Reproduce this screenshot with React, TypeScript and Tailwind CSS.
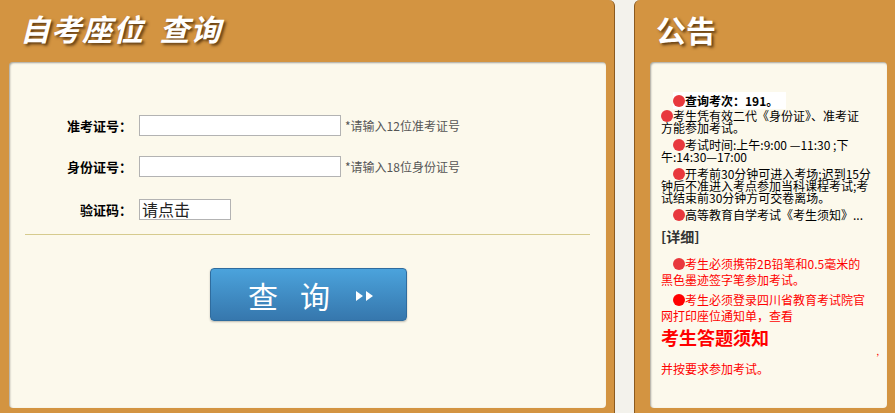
const cjk = "font-['Microsoft_YaHei','Noto_Sans_CJK_SC',sans-serif]";

function Dot({ className = "bg-[#e8383d]" }: { className?: string }) {
  return (
    <span
      className={`inline-block w-[12px] h-[12px] rounded-full align-[-1px] ${className}`}
    />
  );
}

function FormRow({
  label,
  hint,
}: {
  label: string;
  hint?: string;
}) {
  return (
    <div className="flex items-center h-[21px]">
      <label className="w-[124px] text-right text-[13px] font-bold text-black pr-[1px]">
        {label}：
      </label>
      <input
        type="text"
        className="ml-[6px] w-[202px] h-[21px] bg-white border border-[#b3b3b3] outline-none"
      />
      {hint && (
        <span className="ml-[4px] text-[12px] text-[#555]">{hint}</span>
      )}
    </div>
  );
}

export default function App() {
  return (
    <div className={`w-[895px] h-[413px] flex overflow-hidden bg-[#f3f2ec] ${cjk}`}>
      {/* left panel */}
      <div className="w-[615px] shrink-0 flex flex-col bg-[#d39441] border-r border-[#8b5a1f] rounded-tr-[6px]">
        <div className="h-[62px] pl-[20px] pt-[10px]">
          <h1 className="text-[30px] leading-[36px] font-bold italic text-white tracking-[1px] [text-shadow:2px_2px_3px_#5b3810]">
            自考座位&nbsp;&nbsp;查询
          </h1>
        </div>
        <div className="ml-[9px] mr-[8px] h-[346px] rounded-[4px] bg-[#fcf9ec] shadow-[inset_1px_1px_2px_rgba(0,0,0,0.35)] flex flex-col">
          <div className="pt-[53px] flex flex-col gap-[20px]">
            <FormRow label="准考证号" hint="*请输入12位准考证号" />
            <FormRow label="身份证号" hint="*请输入18位身份证号" />
            <div className="flex items-center h-[21px] mt-[2px]">
              <label className="w-[124px] text-right text-[13px] font-bold text-black pr-[1px]">
                验证码：
              </label>
              <div className="ml-[6px] w-[92px] h-[21px] bg-white border border-[#b3b3b3] text-[16px] leading-[18px] pl-[2px] text-[#222]">
                请点击
              </div>
            </div>
          </div>
          <div className="mt-[14px] mx-[16px] border-t border-[#d6cb8e]" />
          <div className="pl-[201px] pt-[33px]">
            <button className="w-[197px] h-[53px] rounded-[4px] border border-[#2f6c9e] bg-gradient-to-b from-[#4ba3dc] to-[#3677ad] flex items-center text-white shadow-[0_1px_2px_rgba(0,0,0,0.25)]">
              <span className="ml-[37px] text-[30px] leading-none tracking-[22px]">
                查询
              </span>
              <svg width="20" height="12" viewBox="0 0 20 12" className="ml-[3px] mt-[2px]">
                <path d="M1 1 L8 6 L1 11 Z" fill="white" />
                <path d="M11 1 L18 6 L11 11 Z" fill="white" />
              </svg>
            </button>
          </div>
        </div>
      </div>

      {/* gap */}
      <div className="w-[19px] shrink-0 bg-[#f3f2ec]" />

      {/* right panel */}
      <div className="flex-1 flex flex-col bg-[#d39441] border-l border-[#8b5a1f] rounded-tl-[6px]">
        <div className="h-[62px] pl-[21px] pt-[11px]">
          <h2 className="text-[30px] leading-[36px] font-bold text-white [text-shadow:2px_2px_3px_#5b3810]">
            公告
          </h2>
        </div>
        <div className="ml-[15px] mr-[8px] h-[346px] rounded-[4px] bg-[#fcf9ec] shadow-[inset_1px_1px_2px_rgba(0,0,0,0.35)] pl-[11px] pr-[16px] pt-[33px] text-[12px] leading-[12px] text-black">
          <p className="pl-[12px]">
            <span className="bg-white font-bold pr-[8px]">
              <Dot />查询考次：191。
            </span>
          </p>
          <p className="mt-[3px]">
            <Dot />考生凭有效二代《身份证》、准考证<br />方能参加考试。
          </p>
          <p className="mt-[5px] indent-[12px]">
            <Dot />考试时间:上午:9:00 —11:30 ;下午:14:30—17:00
          </p>
          <p className="mt-[5px] indent-[12px]">
            <Dot />开考前30分钟可进入考场;迟到15分钟后不准进入考点参加当科课程考试;考试结束前30分钟方可交卷离场。
          </p>
          <p className="mt-[5px] indent-[12px]">
            <Dot />高等教育自学考试《考生须知》...
          </p>
          <p className="mt-[7px] text-[14px] leading-[16px] font-bold text-[#333]">
            [详细]
          </p>
          <div className="mt-[12px] text-[#ff0000] leading-[16px]">
            <p className="indent-[12px]">
              <Dot />考生必须携带2B铅笔和0.5毫米的<br />黑色墨迹签字笔参加考试。
            </p>
            <p className="mt-[4px] indent-[12px]">
              <Dot className="bg-[#ff0000]" />考生必须登录四川省教育考试院官网打印座位通知单，查看
            </p>
            <p className="text-[18px] leading-[24px] font-bold mt-[1px]">考生答题须知</p>
            <p className="text-right text-[9px] leading-[6px] -mr-[8px]">,</p>
            <p className="mt-[6px]">并按要求参加考试。</p>
          </div>
        </div>
      </div>
    </div>
  );
}
